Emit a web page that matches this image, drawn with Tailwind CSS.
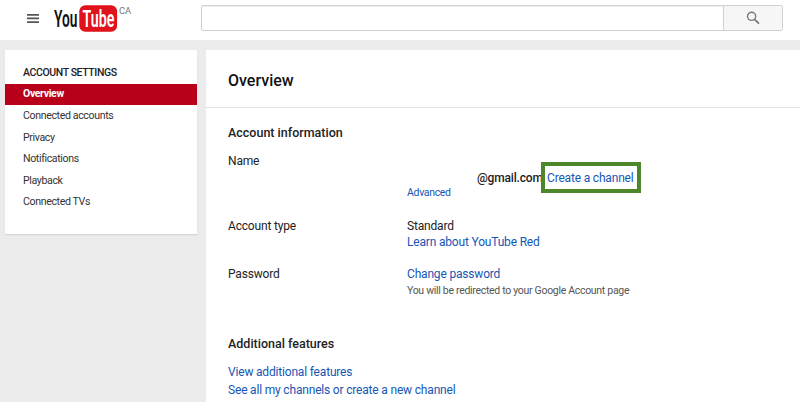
<!DOCTYPE html>
<html lang="en">
<head>
<meta charset="utf-8">
<title>Account settings</title>
<script src="https://cdn.jsdelivr.net/npm/@tailwindcss/browser@4"></script>
</head>
<body class="h-[402px] w-[800px] overflow-hidden bg-[#ebebeb] font-['Roboto',sans-serif] text-[#222]">
<header class="flex h-10 items-start bg-white">
  <svg class="ml-[27px] mt-[13px] h-[11px] w-3 shrink-0" viewBox="0 0 12 11" fill="#555"><path d="M0 1h12v1.7H0zM0 4.6h12v1.7H0zM0 8.2h12v1.7H0z"/></svg>
  <svg class="ml-[13px] h-10 w-[82px] shrink-0" viewBox="52 0 82 40" font-family="Roboto, sans-serif">
    <rect x="79.3" y="5.2" width="37.8" height="26.6" rx="6" fill="#e0121b"/>
    <text transform="translate(54 27) scale(.56 1)" font-weight="600" font-size="24.5" fill="#111">You</text>
    <text transform="translate(82.6 27) scale(.58 1)" font-weight="600" font-size="24.5" fill="#fff">Tube</text>
    <text x="119" y="14.3" font-size="9.3" fill="#777">CA</text>
  </svg>
  <form class="ml-[67px] mt-[5px] flex h-[26px] w-[582px] rounded-[2px] border border-[#d0d0d0]">
    <div class="flex-1 shadow-[inset_0_1px_1px_#eee]"></div>
    <div class="flex w-[59px] items-center justify-center border-l border-[#d0d0d0] bg-[#f6f6f6]">
      <svg class="h-[14px] w-[14px]" viewBox="0 0 14 14" fill="none" stroke="#777"><circle cx="5.6" cy="5.3" r="4.1" stroke-width="1.4"/><path d="M8.6 8.3l4.4 4.4" stroke-width="1.8"/></svg>
    </div>
  </form>
</header>
<div class="flex items-start gap-[9px] pl-[5px] pt-[10px]">
  <nav class="h-[184px] w-[192px] shrink-0 bg-white pt-[11px] text-[10.6px] tracking-[-0.37px] text-[#333] shadow-[0_1px_1px_#d6d6d6]">
    <h2 class="h-[23px] pl-[18px] text-[10.5px] leading-[23px] font-medium tracking-[-0.39px] text-[#222]">ACCOUNT SETTINGS</h2>
    <ul class="leading-[21px]">
      <li class="h-[21px] bg-[#b9001b] pl-[18px] text-[10.5px] leading-[20px] font-bold tracking-[-0.35px] text-white">Overview</li>
      <li class="h-[21.5px] pl-[18px]">Connected accounts</li>
      <li class="h-[21.5px] pl-[18px]">Privacy</li>
      <li class="h-[21.5px] pl-[18px]">Notifications</li>
      <li class="h-[21.5px] pl-[18px]">Playback</li>
      <li class="h-[21.5px] pl-[18px]">Connected TVs</li>
    </ul>
  </nav>
  <main class="h-[352px] flex-1 bg-white text-[12px] leading-4 tracking-[-0.18px]">
    <h1 class="h-[58px] border-b border-[#e2e2e2] pl-[22px] pt-[19px] text-[16px] leading-6 font-medium tracking-normal text-[#111]">Overview</h1>
    <section class="pl-[22px] pt-[17px]">
      <h2 class="text-[12.5px] font-medium tracking-normal">Account information</h2>
      <dl class="mt-3 grid grid-cols-[179px_1fr]">
        <dt class="h-[65px]">Name</dt>
        <dd>
          <div class="flex h-[33px] pl-[70px]">
            <span class="w-[64px] pt-[17px] font-medium">@gmail.com</span>
            <a class="mt-[9px] flex h-[31px] w-[100px] items-center border-4 border-[#4d872a] bg-white pl-[2px] text-[#1656b5]">Create a channel</a>
          </div>
          <a class="block text-[10.5px] leading-[14px] tracking-[-0.32px] text-[#1656b5]">Advanced</a>
        </dd>
        <dt class="h-[48px]">Account type</dt>
        <dd>Standard<a class="block text-[#1656b5]">Learn about YouTube Red</a></dd>
        <dt class="h-[70px]">Password</dt>
        <dd><a class="block text-[#1656b5]">Change password</a><p class="pt-[1px] text-[10.5px] tracking-[-0.3px] text-[#555]">You will be redirected to your Google Account page</p></dd>
      </dl>
      <h2 class="text-[12.5px] font-medium tracking-normal">Additional features</h2>
      <a class="mt-3 block text-[#1656b5]">View additional features</a>
      <a class="mt-[2px] block text-[#1656b5]">See all my channels or create a new channel</a>
    </section>
  </main>
</div>
</body>
</html>
